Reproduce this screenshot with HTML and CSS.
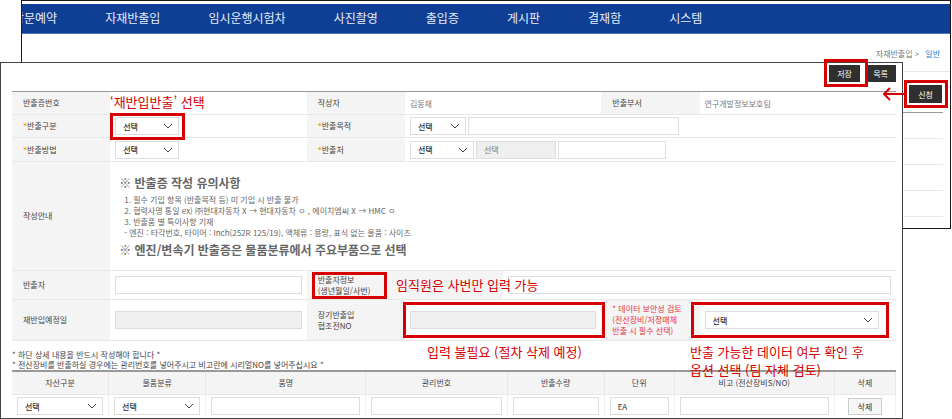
FILE: index.html
```html
<!DOCTYPE html>
<html lang="ko">
<head>
<meta charset="utf-8">
<title>자재반출입</title>
<link rel="stylesheet" href="styles.css">
</head>
<body>
<svg class="defs" aria-hidden="true">
  <symbol id="chevron" viewBox="0 0 10 6"><path d="M1 1 L5 5 L9 1" fill="none" stroke="#444" stroke-width="1"/></symbol>
</svg>
<div class="stage">
  <section class="window back">
    <nav class="menu">
      <ul>
        <li><a href="#">방문예약</a></li>
        <li><a href="#">자재반출입</a></li>
        <li><a href="#">임시운행시험차</a></li>
        <li><a href="#">사진촬영</a></li>
        <li><a href="#">출입증</a></li>
        <li><a href="#">게시판</a></li>
        <li><a href="#">결재함</a></li>
        <li><a href="#">시스템</a></li>
      </ul>
    </nav>
    <div class="crumbs"><span>자재반출입 &gt;</span><a href="#">일반</a></div>
    <div class="apply"><button class="btn" type="button">신청</button></div>
    <div class="list"><div></div><div></div><div></div><div></div></div>
  </section>

  <form class="window front">
    <div class="toolbar">
      <button class="btn" type="button">저장</button>
      <button class="btn" type="button">목록</button>
    </div>
    <table class="form">
      <colgroup><col><col><col><col><col><col><col><col><col></colgroup>
      <tr>
        <th>반출증번호</th><td colspan="2"></td>
        <th>작성자</th><td colspan="2">김동재</td>
        <th>반출부서</th><td colspan="2">연구개발정보보호팀</td>
      </tr>
      <tr>
        <th><label for="kind"><i>*</i>반출구분</label></th>
        <td colspan="2"><span class="select w-m"><select id="kind"><option>선택</option></select><svg><use href="#chevron"/></svg></span></td>
        <th><label for="purpose"><i>*</i>반출목적</label></th>
        <td colspan="5"><div class="fields"><span class="select w-s"><select id="purpose"><option>선택</option></select><svg><use href="#chevron"/></svg></span><input class="w-xl" type="text" aria-label="반출목적 상세"></div></td>
      </tr>
      <tr class="r-method">
        <th><label for="method"><i>*</i>반출방법</label></th>
        <td colspan="2"><span class="select w-m"><select id="method"><option>선택</option></select><svg><use href="#chevron"/></svg></span></td>
        <th><label for="dest"><i>*</i>반출처</label></th>
        <td colspan="5"><div class="fields"><span class="select w-m"><select id="dest"><option>선택</option></select><svg><use href="#chevron"/></svg></span><input class="w-l" type="text" value="선택" disabled aria-label="반출처 선택"><input class="w-ll" type="text" aria-label="반출처 상세"></div></td>
      </tr>
      <tr class="r-guide">
        <th>작성안내</th>
        <td colspan="8">
          <div class="guide">
            <h2>※ 반출증 작성 유의사항</h2>
            <p>1. 필수 기입 항목 (반출목적 등) 미 기입 시 반출 불가</p>
            <p>2. 협력사명 통일 ex) ㈜현대자동차 X → 현대자동차 ㅇ , 에이치엠씨 X → HMC ㅇ</p>
            <p>3. 반출품 별 특이사항 기재</p>
            <p>- 엔진 : 타각번호, 타이어 : Inch(252R 125/19), 액체류 : 용량, 표식 없는 물품 : 사이즈</p>
            <h2>※ 엔진/변속기 반출증은 물품분류에서 주요부품으로 선택</h2>
          </div>
        </td>
      </tr>
      <tr class="r-person">
        <th><label for="person">반출자</label></th>
        <td colspan="2"><input id="person" type="text"></td>
        <th colspan="2"><label for="info">반출자정보<br>(생년월일/사번)</label></th>
        <td colspan="4"><input id="info" type="text"></td>
      </tr>
      <tr class="r-return">
        <th><label for="back">재반입예정일</label></th>
        <td colspan="2"><input id="back" type="text" disabled></td>
        <th><label for="coop">장기반출입<br>협조전NO</label></th>
        <td colspan="2"><input id="coop" type="text" disabled></td>
        <th class="warn"><label for="security">* 데이터 보안성 검토<br>(전산장비/저장매체<br>반출 시 필수 선택)</label></th>
        <td colspan="2"><span class="select w-wide"><select id="security"><option>선택</option></select><svg><use href="#chevron"/></svg></span></td>
      </tr>
    </table>

    <div class="notes">
      <p>* 하단 상세 내용을 반드시 작성해야 합니다 *</p>
      <p>* 전산장비를 반출하실 경우에는 관리번호를 넣어주시고 비고란에 시리얼NO를 넣어주십시요 *</p>
    </div>

    <table class="items">
      <colgroup><col class="c-kind"><col class="c-kind"><col class="c-name"><col class="c-no"><col class="c-kind"><col class="c-unit"><col class="c-name"><col class="c-del"></colgroup>
      <tr><th>자산구분</th><th>물품분류</th><th>품명</th><th>관리번호</th><th>반출수량</th><th>단위</th><th>비고 (전산장비S/NO)</th><th>삭제</th></tr>
      <tr>
        <td><span class="select"><select aria-label="자산구분"><option>선택</option></select><svg><use href="#chevron"/></svg></span></td>
        <td><span class="select"><select aria-label="물품분류"><option>선택</option></select><svg><use href="#chevron"/></svg></span></td>
        <td><input type="text" aria-label="품명"></td>
        <td><input type="text" aria-label="관리번호"></td>
        <td><input type="text" aria-label="반출수량"></td>
        <td><input type="text" value="EA" aria-label="단위"></td>
        <td><input type="text" aria-label="비고"></td>
        <td class="del"><button type="button">삭제</button></td>
      </tr>
    </table>
  </form>

  <div class="mark m-kind"></div>
  <div class="mark m-save"></div>
  <div class="mark m-apply"></div>
  <div class="mark m-info"></div>
  <div class="mark m-coop"></div>
  <div class="mark m-security"></div>
  <svg class="arrow" viewBox="0 0 24 14"><path d="M24 7 H3 M9 1 L3 7 L9 13" fill="none" stroke="#d60000" stroke-width="2"/></svg>
  <p class="say s-kind">‘재반입반출’ 선택</p>
  <p class="say s-info">임직원은 사번만 입력 가능</p>
  <p class="say s-coop">입력 불필요 (절차 삭제 예정)</p>
  <p class="say s-security">반출 가능한 데이터 여부 확인 후<br>옵션 선택 (팀 자체 검토)</p>
</div>
</body>
</html>
```
FILE: styles.css
```css
* { box-sizing: border-box; }
body {
  margin: 0;
  background: #fff;
  color: #444;
  font: 8px/11px "Noto Sans CJK KR", sans-serif;
}
h2, p, ul { margin: 0; padding: 0; }
a { color: inherit; text-decoration: none; }
button, input, select { font: inherit; color: #333; margin: 0; border-radius: 0; }
.defs { display: none; }
.stage { position: relative; padding-top: 62px; }
.window { background: #fff; }

/* list window behind */
.back {
  position: absolute;
  top: 0;
  left: 21px;
  right: 1px;
  border: 1px solid #1a1a1a;
}
.menu {
  margin-top: 3px;
  padding: 4px 0 5px;
  overflow: hidden;
  background: #0f3f95;
  border-bottom: 1px solid #4a72b5;
}
.menu ul {
  display: flex;
  gap: 48px;
  margin-left: -9px;
  list-style: none;
  font-size: 12px;
  line-height: 20px;
  white-space: nowrap;
  color: #e6ecf7;
}
.crumbs {
  display: flex;
  justify-content: flex-end;
  gap: 6px;
  padding: 14px 10px 12px;
  border-bottom: 1px solid #e8e8e8;
  color: #777;
}
.crumbs a { color: #2a7de1; }
.apply { display: flex; justify-content: flex-end; margin: 0 7px; padding: 13px 1px 9px; border-bottom: 1px solid #999; }
.apply .btn { width: 33px; height: 18px; }
.list { margin: 0 7px 11px; }
.list div { height: 26px; border-bottom: 1px solid #e8e8e8; }

.btn {
  width: 31px;
  height: 17px;
  padding: 0;
  border: 0;
  background: #2f2f2f;
  color: #fff;
}

/* form window */
.front {
  position: relative;
  margin-right: 49px;
  padding: 2px 6px 1px 11px;
  border: 1px solid #444;
}
.toolbar { display: flex; justify-content: flex-end; gap: 5px; padding-bottom: 9px; }

table { width: 100%; table-layout: fixed; border-spacing: 0; }
th, td { padding: 0 5px; height: 23px; border-bottom: 1px solid #e8e8e8; text-align: left; vertical-align: middle; }
th { background: #f4f4f4; font-weight: 400; }
.form { border-top: 1px solid #999; }
.form th { padding: 0 0 1px 11px; white-space: nowrap; }
.form th i { color: #f5a800; font-style: normal; font-weight: 700; }
.form td { color: #777; }
.form .r-method > * { height: 24px; }
.form .r-guide > * { height: 109px; }
.form .r-person > * { height: 29px; }
.form .r-return > * { height: 41px; }
.form .warn { color: #e8323c; }

input, select {
  display: block;
  width: 100%;
  height: 18px;
  padding: 0 7px;
  border: 1px solid #ddd;
  background: #fff;
  appearance: none;
}
select { font-weight: 500; }
input:disabled { background: #efefef; color: #777; }
.select { position: relative; display: block; }
.select svg {
  position: absolute;
  right: 6px;
  top: 6px;
  width: 10px;
  height: 6px;
  pointer-events: none;
}
.fields { display: flex; gap: 2px; }
.w-s { width: 56px; }
.w-m { width: 64px; }
.w-l { width: 80px; }
.w-ll { width: 108px; }
.w-xl { width: 211px; }
.w-wide { width: 174px; }

.guide { padding: 0 0 1px 4px; color: #666; }
.guide h2 { font-size: 12px; line-height: 23px; font-weight: 700; }
.guide p { padding-left: 5px; }

.notes { padding: 9px 0 0; }
.notes p { line-height: 10px; }
.items { border-top: 2px solid #999; }
.items th { border-right: 1px solid #e8e8e8; padding: 0 0 1px; text-align: center; }
.items td { border-right: 1px solid #f0f0f0; border-bottom: 0; height: 22px; }
.items td.del { padding: 0; }
.del button { display: block; width: 34px; height: 17px; margin: 0 auto; padding: 0; border: 1px solid #ccc; background: #f6f6f6; }
.c-kind { width: 97px; }
.c-name { width: 160px; }
.c-no { width: 141px; }
.c-unit { width: 70px; }
.c-del { width: 61px; }

/* red annotations laid over both windows */
.mark { position: absolute; border: 3px solid #d60000; pointer-events: none; }
.m-kind { left: 110px; top: 113px; width: 75px; height: 27px; }
.m-save { right: 84px; top: 59px; width: 44px; height: 28px; }
.m-apply { right: 4px; top: 80px; width: 44px; height: 28px; }
.m-info { left: 312px; top: 272px; width: 75px; height: 27px; }
.m-coop { left: 403px; top: 302px; width: 202px; height: 36px; }
.m-security { right: 63px; top: 302px; width: 198px; height: 36px; }
.arrow { position: absolute; right: 47px; top: 87px; width: 24px; height: 14px; }
.say { position: absolute; color: #d60000; font-size: 13px; line-height: 18px; white-space: nowrap; }
.s-kind { left: 110px; top: 93px; }
.s-info { left: 396px; top: 276px; }
.s-coop { left: 427px; top: 343px; }
.s-security { left: 690px; top: 343px; }
```
